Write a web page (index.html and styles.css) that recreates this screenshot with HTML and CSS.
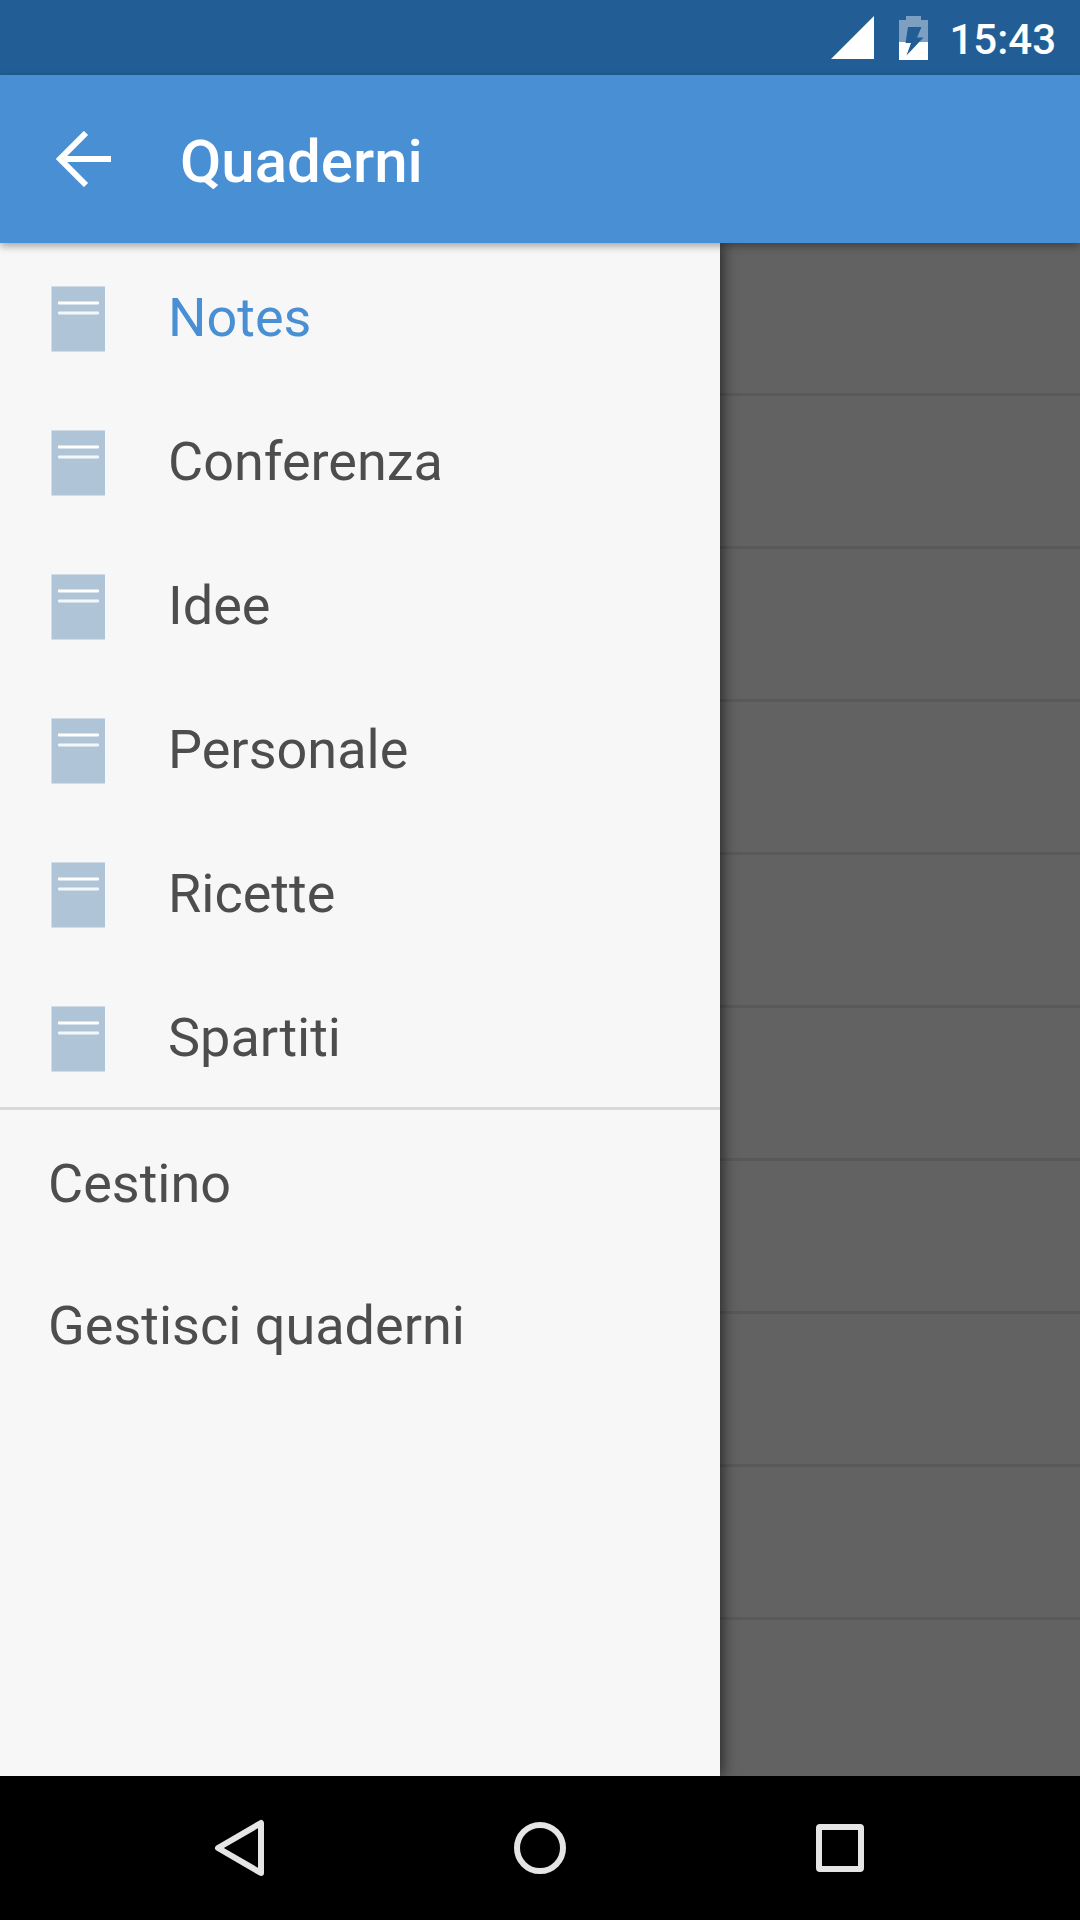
FILE: index.html
```html
<!DOCTYPE html>
<html lang="it">
<head>
    <meta charset="UTF-8">
    <meta name="viewport" content="width=device-width, initial-scale=1.0">
    <title>Quaderni</title>
    <link rel="stylesheet" href="styles.css">
</head>
<body>

<!-- Shared notebook icon -->
<svg class="sprite" aria-hidden="true">
    <symbol id="notebook" viewBox="0 0 54 66">
        <rect x="0.5" y="0.5" width="53.5" height="65" fill="#b0c4d7"/>
        <rect x="7" y="15.5" width="41" height="3" rx="1" fill="#fff"/>
        <rect x="7" y="25.5" width="41" height="3" rx="1" fill="#f4f7fa"/>
    </symbol>
</svg>

<!-- Status bar -->
<div class="status-bar">
    <svg class="signal" width="43" height="43" viewBox="0 0 43 43" aria-hidden="true">
        <path d="M0 43 43 0v43z" fill="#fff"/>
    </svg>
    <svg class="battery" width="29" height="44" viewBox="0 0 29 44" aria-hidden="true">
        <path d="M0 4h7V0h15v4h7v22H0z" fill="#7c9fc2"/>
        <path d="M0 26h29v18H0z" fill="#fff"/>
        <path d="M9 11h13.500l-4.500 10.500h6.500L7.500 39.500 12 27H6.500z" fill="#225e95"/>
    </svg>
    <time class="clock">15:43</time>
</div>

<!-- App bar -->
<header class="app-bar">
    <button type="button" class="back" aria-label="Indietro">
        <svg width="56" height="56" viewBox="0 0 56 56" fill="none" stroke="#fff">
            <path d="M30 2 4 28l26 26" stroke-width="6"/>
            <path d="M6 28h49" stroke-width="6"/>
        </svg>
    </button>
    <h1>Quaderni</h1>
</header>

<div class="content">
    <!-- Drawer -->
    <nav class="drawer">
        <ul class="notebooks">
            <li><a href="#notes" class="active"><svg class="icon"><use href="#notebook"/></svg>Notes</a></li>
            <li><a href="#conferenza"><svg class="icon"><use href="#notebook"/></svg>Conferenza</a></li>
            <li><a href="#idee"><svg class="icon"><use href="#notebook"/></svg>Idee</a></li>
            <li><a href="#personale"><svg class="icon"><use href="#notebook"/></svg>Personale</a></li>
            <li><a href="#ricette"><svg class="icon"><use href="#notebook"/></svg>Ricette</a></li>
            <li><a href="#spartiti"><svg class="icon"><use href="#notebook"/></svg>Spartiti</a></li>
        </ul>
        <ul class="actions">
            <li><a href="#cestino">Cestino</a></li>
            <li><a href="#gestisci">Gestisci quaderni</a></li>
        </ul>
    </nav>

    <!-- Dimmed list behind the drawer -->
    <div class="list">
        <div class="list-row"></div>
        <div class="list-row"></div>
        <div class="list-row"></div>
        <div class="list-row"></div>
        <div class="list-row"></div>
        <div class="list-row"></div>
        <div class="list-row"></div>
        <div class="list-row"></div>
        <div class="list-row"></div>
    </div>
</div>

<!-- System navigation -->
<footer class="nav-bar">
    <button type="button" aria-label="Indietro">
        <svg width="60" height="60" viewBox="0 0 60 60">
            <path d="M51 5v50L8 30z"/>
        </svg>
    </button>
    <button type="button" aria-label="Home">
        <svg width="60" height="60" viewBox="0 0 60 60">
            <circle cx="30" cy="30" r="23"/>
        </svg>
    </button>
    <button type="button" aria-label="Recenti">
        <svg width="60" height="60" viewBox="0 0 60 60">
            <rect x="9" y="9" width="42" height="42" rx="1"/>
        </svg>
    </button>
</footer>

</body>
</html>
```
FILE: styles.css
```css
* {
    box-sizing: border-box;
}
body {
    margin: 0;
    min-height: 100vh;
    display: flex;
    flex-direction: column;
    font-family: Roboto, sans-serif;
    background-color: #626262;
}
button {
    padding: 0;
    border: none;
    background: none;
    cursor: pointer;
}
svg {
    display: block;
}
.sprite {
    display: none;
}

/* Status bar */
.status-bar {
    height: 75px;
    padding-right: 24px;
    display: flex;
    justify-content: flex-end;
    align-items: center;
    background-color: #225e95;
    color: white;
}
.battery {
    margin: 0 21px 0 25px;
}
.clock {
    padding-top: 4px;
    font-size: 42px;
    font-weight: 500;
}

/* App bar */
.app-bar {
    position: relative;
    height: 168px;
    padding: 0 56px;
    display: flex;
    align-items: center;
    gap: 68px;
    background-color: #488fd4;
    box-shadow: 0 3px 8px rgba(0, 0, 0, 0.35);
    color: white;
    z-index: 2;
}
.app-bar h1 {
    margin: 0;
    padding-top: 4px;
    font-size: 60px;
    font-weight: 500;
}

/* Drawer */
.content {
    flex: 1;
    display: flex;
}
.drawer {
    position: relative;
    width: 66.6667%;
    background-color: #f7f7f7;
    box-shadow: 2px 0 14px rgba(0, 0, 0, 0.65);
    z-index: 1;
}
.drawer ul {
    margin: 0;
    padding: 0;
    list-style: none;
}
.drawer a {
    display: flex;
    align-items: center;
    color: #4d4d4d;
    font-size: 54px;
    text-decoration: none;
}
.notebooks {
    border-bottom: 3px solid #d9d9d9;
}
.notebooks a {
    height: 144px;
    padding: 4px 51px 0;
    gap: 63px;
}
.actions a {
    height: 142px;
    padding: 4px 48px 0;
}
.drawer a.active {
    color: #488fd4;
}
.icon {
    width: 54px;
    height: 66px;
    margin-top: 4px;
}

/* List */
.list {
    flex: 1;
}
.list-row {
    height: 153px;
    border-bottom: 3px solid #595959;
}

/* System navigation */
.nav-bar {
    position: relative;
    height: 144px;
    display: flex;
    justify-content: center;
    align-items: center;
    gap: 240px;
    background-color: black;
    z-index: 2;
}
.nav-bar svg {
    fill: none;
    stroke: #e5e5e5;
    stroke-width: 6;
    stroke-linejoin: round;
}
```
